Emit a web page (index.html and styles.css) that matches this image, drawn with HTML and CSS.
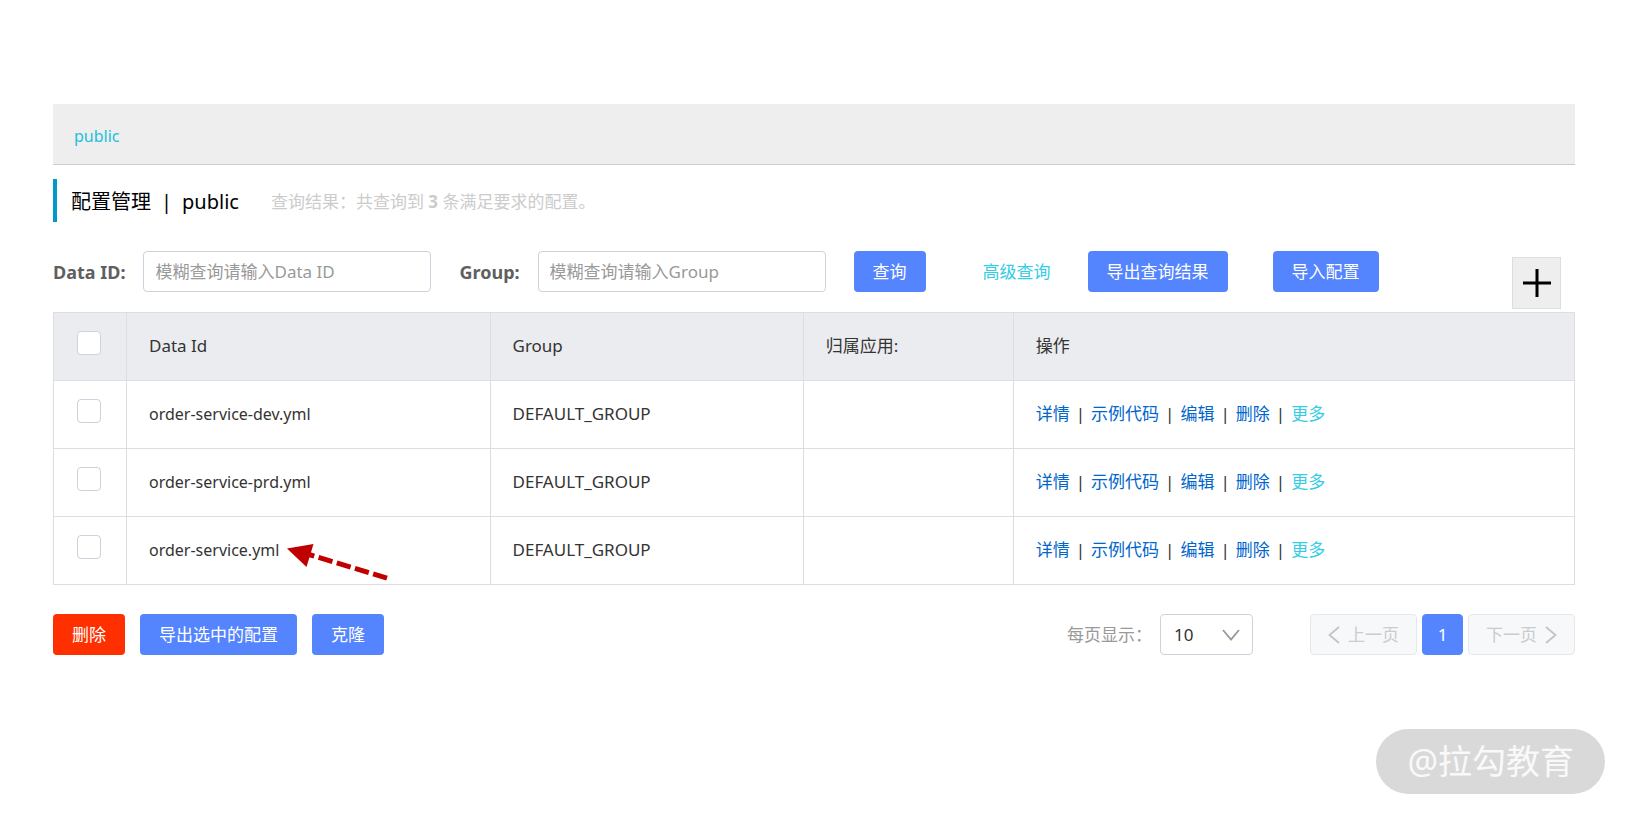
FILE: index.html
```html
<!DOCTYPE html>
<html lang="zh-CN">
<head>
<meta charset="utf-8">
<title>配置管理</title>
<link rel="stylesheet" href="styles.css">
</head>
<body>
<main class="page">
  <nav class="namespace-bar"><a class="namespace" href="#">public</a></nav>

  <header class="title-bar">
    <h1 class="title"><span>配置管理</span><span class="title-sep">|</span><span>public</span></h1>
    <p class="result">查询结果：共查询到 <strong>3</strong> 条满足要求的配置。</p>
  </header>

  <div class="toolbar">
    <form class="search">
      <div class="field"><label for="data-id">Data ID:</label><input id="data-id" class="text-input" type="text" placeholder="模糊查询请输入Data ID"></div>
      <div class="field"><label for="group">Group:</label><input id="group" class="text-input" type="text" placeholder="模糊查询请输入Group"></div>
      <button class="btn" type="button">查询</button>
      <a class="advanced" href="#">高级查询</a>
      <button class="btn" type="button">导出查询结果</button>
      <button class="btn btn-import" type="button">导入配置</button>
    </form>
    <button class="add" type="button" aria-label="新建配置">
      <svg width="30" height="30" viewBox="0 0 30 30"><path d="M1 15H29M15 1V29" stroke="#000" stroke-width="3"/></svg>
    </button>
  </div>

  <table class="configs">
    <colgroup><col class="col-check"><col class="col-id"><col class="col-group"><col class="col-app"><col></colgroup>
    <thead>
      <tr>
        <th class="check"><input class="box" type="checkbox" aria-label="全选"></th>
        <th>Data Id</th><th>Group</th><th>归属应用:</th><th>操作</th>
      </tr>
    </thead>
    <tbody>
      <tr>
        <td class="check"><input class="box" type="checkbox" aria-label="order-service-dev.yml"></td>
        <td class="id">order-service-dev.yml</td><td>DEFAULT_GROUP</td><td></td>
        <td><a href="#">详情</a><span class="sep">|</span><a href="#">示例代码</a><span class="sep">|</span><a href="#">编辑</a><span class="sep">|</span><a href="#">删除</a><span class="sep">|</span><a class="more" href="#">更多</a></td>
      </tr>
      <tr>
        <td class="check"><input class="box" type="checkbox" aria-label="order-service-prd.yml"></td>
        <td class="id">order-service-prd.yml</td><td>DEFAULT_GROUP</td><td></td>
        <td><a href="#">详情</a><span class="sep">|</span><a href="#">示例代码</a><span class="sep">|</span><a href="#">编辑</a><span class="sep">|</span><a href="#">删除</a><span class="sep">|</span><a class="more" href="#">更多</a></td>
      </tr>
      <tr>
        <td class="check"><input class="box" type="checkbox" aria-label="order-service.yml"></td>
        <td class="id"><span class="marked">order-service.yml<svg class="arrow" width="102" height="38" viewBox="0 0 102 38"><path d="M0 5.500L26.500 1L19.500 24Z" fill="#c00000"/><path d="M22 11.500L101 35.500" stroke="#c00000" stroke-width="5" stroke-dasharray="14.500 4.500" stroke-dashoffset="9"/></svg></span></td>
        <td>DEFAULT_GROUP</td><td></td>
        <td><a href="#">详情</a><span class="sep">|</span><a href="#">示例代码</a><span class="sep">|</span><a href="#">编辑</a><span class="sep">|</span><a href="#">删除</a><span class="sep">|</span><a class="more" href="#">更多</a></td>
      </tr>
    </tbody>
  </table>

  <footer class="footer">
    <div class="batch">
      <button class="btn btn-danger" type="button">删除</button>
      <button class="btn" type="button">导出选中的配置</button>
      <button class="btn" type="button">克隆</button>
    </div>
    <div class="pagination">
      <label class="size-label" for="page-size">每页显示：</label>
      <div class="select-wrap">
        <select id="page-size" class="page-size"><option>10</option></select>
        <svg class="chevron" width="18" height="12" viewBox="0 0 18 12"><path d="M1 1L9 10.500L17 1" fill="none" stroke="#999" stroke-width="1.800"/></svg>
      </div>
      <div class="pager">
        <button class="page-btn" type="button" disabled><svg width="12" height="18" viewBox="0 0 12 18"><path d="M11 1L1.500 9L11 17" fill="none" stroke="#c4c4c4" stroke-width="1.800"/></svg>上一页</button>
        <button class="page-btn current" type="button">1</button>
        <button class="page-btn" type="button" disabled>下一页<svg width="12" height="18" viewBox="0 0 12 18"><path d="M1 1L10.500 9L1 17" fill="none" stroke="#c4c4c4" stroke-width="1.800"/></svg></button>
      </div>
    </div>
  </footer>
</main>
<div class="watermark">@拉勾教育</div>
</body>
</html>
```
FILE: styles.css
```css
* { box-sizing: border-box; }
body {
  margin: 0;
  background: #fff;
  color: #333;
  font: 17px/24px "Noto Sans", "Noto Sans CJK SC", sans-serif;
}
button, input, select { font: inherit; }
a { color: #06c; text-decoration: none; }
.page { padding: 104px 51px 0 53px; }
.namespace, .id { font-size: 16px; }

.namespace-bar {
  padding: 20px 21px 16px;
  background: #eee;
  border-bottom: 1px solid #ccc;
}
.namespace { color: #1bbfe0; }

.title-bar {
  display: flex;
  align-items: center;
  gap: 32px;
  margin-top: 14px;
  padding: 9px 0 6px 14px;
  border-left: 4px solid #09c;
}
.title {
  display: flex;
  gap: 10px;
  margin: 0;
  color: #000;
  font-size: 20px;
  font-weight: 400;
  line-height: 28px;
}
.result { margin: 0; color: #ccc; }

.toolbar {
  display: flex;
  justify-content: space-between;
  align-items: flex-start;
  margin: 29px 0 3px;
}
.search { display: flex; align-items: center; }
.field { display: flex; align-items: center; gap: 18px; margin-right: 28px; }
.field label { color: #5f5f5f; font-size: 18px; font-weight: 700; white-space: nowrap; }
.text-input {
  width: 288px;
  height: 41px;
  padding: 0 11px;
  border: 1px solid #d0d1dd;
  border-radius: 4px;
  color: #333;
}
.text-input::placeholder { color: #999; opacity: 1; }
.btn {
  height: 41px;
  padding: 0 19px;
  border: 0;
  border-radius: 4px;
  background: #5584ff;
  color: #fff;
  white-space: nowrap;
}
.btn-danger { background: #ff3000; }
.btn-import { margin-left: 45px; }
.advanced { margin: 0 37px 0 57px; color: #33cde5; white-space: nowrap; }
.add {
  display: flex;
  align-items: center;
  justify-content: center;
  width: 49px;
  height: 52px;
  margin: 6px 14px 0 0;
  padding: 0;
  border: 1px solid #ddd;
  background: #eee;
}

.configs {
  width: 100%;
  table-layout: fixed;
  border-collapse: collapse;
}
.col-check { width: 73px; }
.col-id { width: 23.9%; }
.col-group { width: 20.6%; }
.col-app { width: 13.8%; }
.configs th, .configs td {
  height: 68px;
  padding: 0 22px 2px;
  border: 1px solid #dcdee3;
  font-weight: 400;
  text-align: left;
  white-space: nowrap;
}
.configs th { background: #ebecf0; }
.configs .check { padding: 0 2px 8px 0; text-align: center; }
.box {
  appearance: none;
  display: inline-block;
  width: 24px;
  height: 24px;
  margin: 0;
  border: 1px solid #d0d1dd;
  border-radius: 4px;
  background: #fff;
  vertical-align: middle;
}
.sep { margin: 0 6px; }
.configs .more { color: #33cde5; }
.marked { position: relative; }
.arrow { position: absolute; left: 100%; top: 4px; margin-left: 8px; }

.footer {
  display: flex;
  justify-content: space-between;
  align-items: center;
  margin-top: 29px;
}
.batch { display: flex; gap: 15px; }
.pagination { display: flex; align-items: center; }
.size-label { color: #999; }
.select-wrap { position: relative; margin: 0 57px 0 8px; }
.page-size {
  appearance: none;
  width: 93px;
  height: 41px;
  padding: 0 13px;
  border: 1px solid #d0d1dd;
  border-radius: 4px;
  background: #fff;
  color: #333;
}
.chevron { position: absolute; right: 13px; top: 15px; pointer-events: none; }
.pager { display: flex; gap: 5px; }
.page-btn {
  display: flex;
  align-items: center;
  justify-content: center;
  gap: 8px;
  min-width: 41px;
  height: 41px;
  padding: 0 17px;
  border: 1px solid #e6e7eb;
  border-radius: 4px;
  background: #f7f8fa;
  color: #ccc;
}
.page-btn.current { padding: 0; border-color: #5584ff; background: #5584ff; color: #fff; }

.watermark {
  position: absolute;
  right: 21px;
  bottom: 21px;
  padding: 0 31px;
  border-radius: 33px;
  background: #d9d9d9;
  color: #f9f9f9;
  font-size: 34px;
  line-height: 65px;
}
```
